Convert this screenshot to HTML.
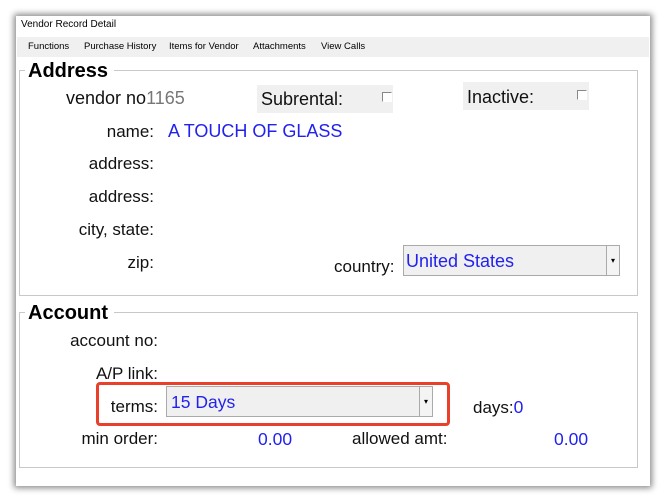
<!DOCTYPE html><html><head><style>
body{margin:0;width:664px;height:499px;background:#fff;position:relative;overflow:hidden;font-family:"Liberation Sans","DejaVu Sans",sans-serif;}
.a{position:absolute;white-space:nowrap}
.win{position:absolute;left:16px;top:16px;width:634px;height:470px;background:#fff;box-shadow:0 0 6px 2px #888;}
.t{font-size:17px;color:#111}
.r{text-align:right}
.b{font-size:17.5px;color:#2222ee}
.m{font-size:9.5px;top:41px}
.gb{position:absolute;border:1px solid #c8c8c8}
.cb{position:absolute;width:8px;height:8px;border:1px solid #888;border-right-color:#fff;border-bottom-color:#fff;background:#fff}
.dd{position:absolute;background:#f0f0f0;border:1px solid #aaa}
.arr{position:absolute;right:0;top:0;bottom:0;width:12px;border-left:1px solid #aaa;background:#f4f4f4;font-size:8px;text-align:center;line-height:30px}
</style></head><body>
<div class="win"></div>
<div class="a" style="left:21px;top:19px;font-size:10px;color:#000">Vendor Record Detail</div>
<div class="a" style="left:17px;top:37px;width:632px;height:20px;background:#f0f0f0"></div>
<div class="a m" style="left:28px">Functions</div>
<div class="a m" style="left:84px">Purchase History</div>
<div class="a m" style="left:169px">Items for Vendor</div>
<div class="a m" style="left:253px">Attachments</div>
<div class="a m" style="left:321px">View Calls</div>

<div class="gb" style="left:19px;top:70px;width:617px;height:224px"></div>
<div class="a" style="left:25px;top:60px;background:#fff;padding:0 6px 0 3px;font-size:20px;font-weight:bold">Address</div>
<div class="a t" style="left:66px;top:88px;font-size:18px">vendor no<span style="color:#777">1165</span></div>
<div class="a" style="left:257px;top:85px;width:136px;height:28px;background:#f0f0f0"></div>
<div class="a t" style="left:261px;top:89px;font-size:18px">Subrental:</div>
<div class="cb" style="left:382px;top:92px"></div>
<div class="a" style="left:463px;top:82px;width:126px;height:28px;background:#f0f0f0"></div>
<div class="a t" style="left:467px;top:87px;font-size:18px">Inactive:</div>
<div class="cb" style="left:577px;top:90px"></div>
<div class="a t r" style="right:510px;top:122px">name:</div>
<div class="a b" style="left:168px;top:121px;font-size:18px">A TOUCH OF GLASS</div>
<div class="a t r" style="right:510px;top:154px">address:</div>
<div class="a t r" style="right:510px;top:187px">address:</div>
<div class="a t r" style="right:510px;top:220px">city, state:</div>
<div class="a t r" style="right:510px;top:253px">zip:</div>
<div class="a t" style="left:334px;top:257px">country:</div>
<div class="dd" style="left:403px;top:245px;width:215px;height:29px"><span class="a b" style="left:2px;top:5px;font-size:18px">United States</span><div class="arr">▾</div></div>

<div class="gb" style="left:19px;top:312px;width:617px;height:154px"></div>
<div class="a" style="left:25px;top:302px;background:#fff;padding:0 6px 0 3px;font-size:20px;font-weight:bold">Account</div>
<div class="a t r" style="right:506px;top:331px">account no:</div>
<div class="a t r" style="right:506px;top:364px">A/P link:</div>
<div class="a" style="left:96px;top:382px;width:348px;height:38px;border:3px solid #e8402a;border-radius:4px"></div>
<div class="a t r" style="right:506px;top:397px">terms:</div>
<div class="dd" style="left:166px;top:386px;width:265px;height:29px"><span class="a b" style="left:4px;top:5px">15 Days</span><div class="arr">▾</div></div>
<div class="a t" style="left:473px;top:397px">days:<span class="b">0</span></div>
<div class="a t r" style="right:506px;top:429px">min order:</div>
<div class="a b" style="left:258px;top:429px">0.00</div>
<div class="a t" style="left:352px;top:429px">allowed amt:</div>
<div class="a b" style="left:554px;top:429px">0.00</div>
</body></html>
